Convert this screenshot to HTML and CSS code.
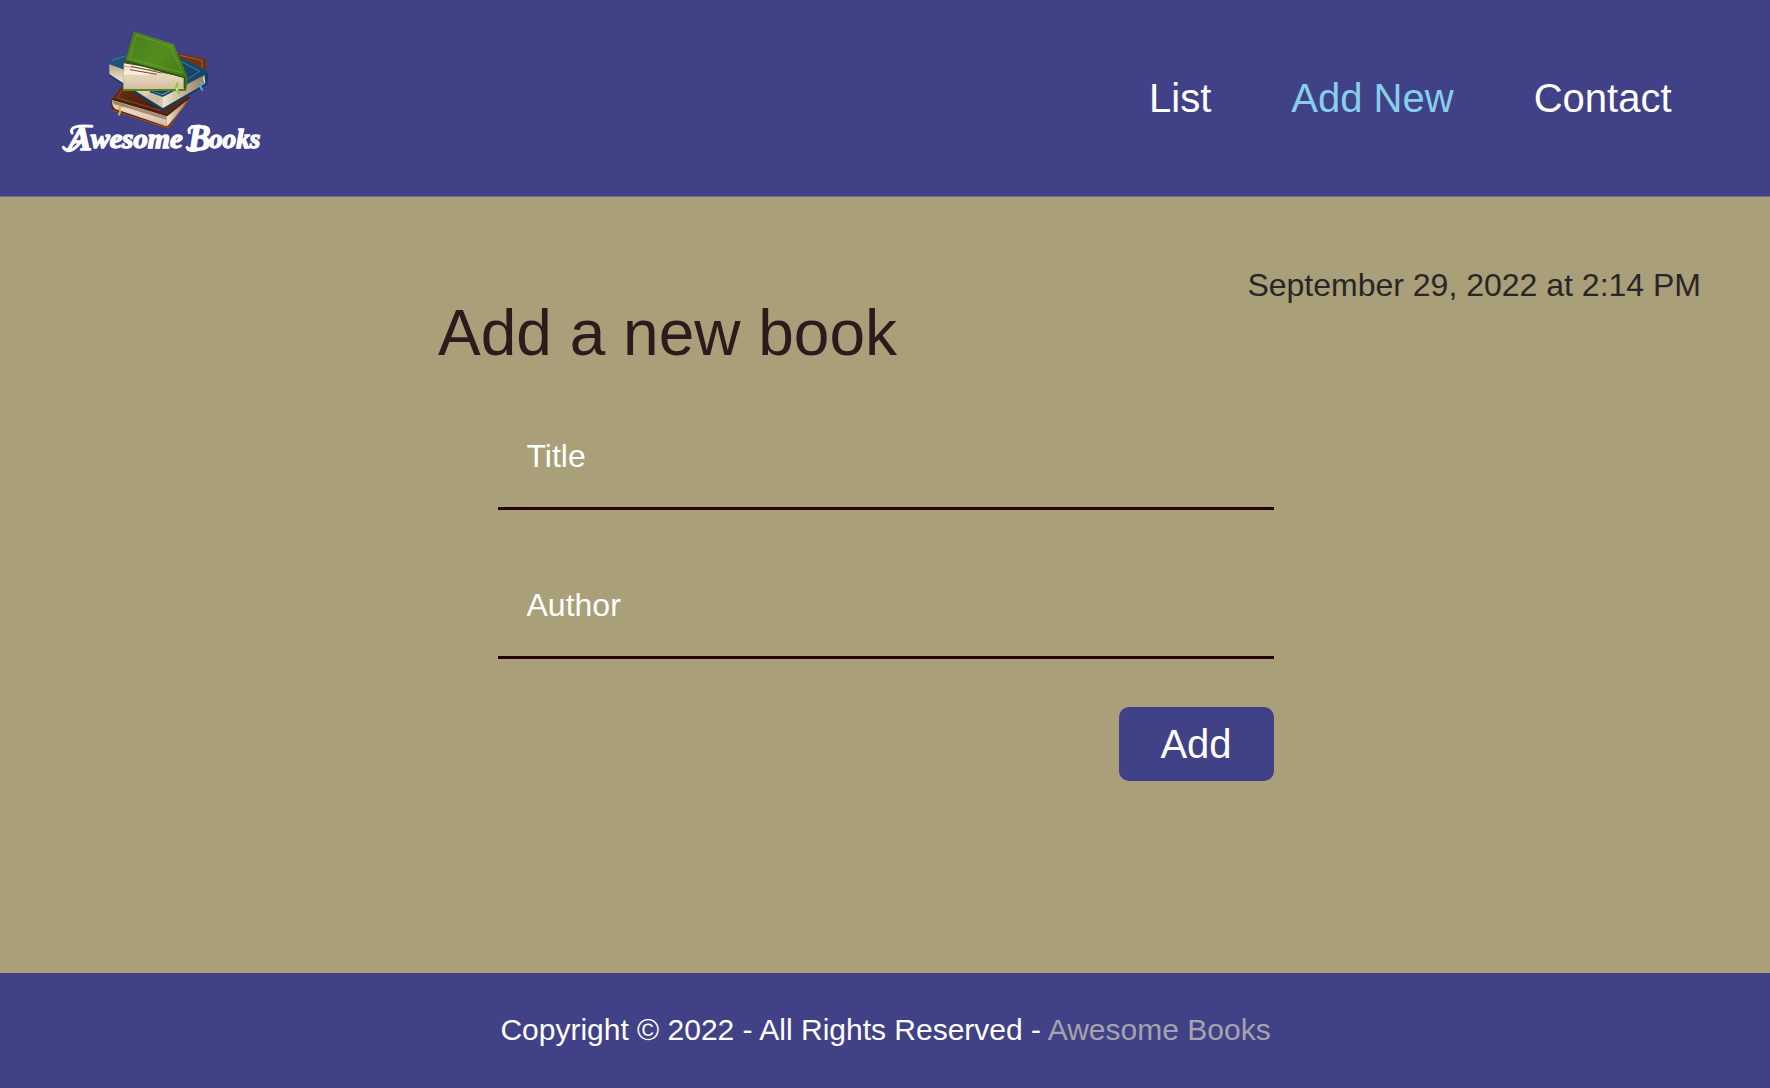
FILE: index.html
```html
<!DOCTYPE html>
<html lang="en">
<head>
<meta charset="utf-8">
<title>Awesome Books</title>
<link rel="stylesheet" href="styles.css">
</head>
<body>
<header class="header">
  <a class="logo" aria-label="Awesome Books">
    <svg class="logo-art" viewBox="0 0 690 450">
      <defs>
        <linearGradient id="green" x1="0" y1="0" x2="1" y2="1"><stop offset="0" stop-color="#437c1b"/><stop offset=".5" stop-color="#548d1e"/><stop offset="1" stop-color="#38720f"/></linearGradient>
        <linearGradient id="blue" x1="0" y1="0" x2="1" y2="1"><stop offset="0" stop-color="#20557f"/><stop offset="1" stop-color="#103a5c"/></linearGradient>
        <linearGradient id="brown" x1="0" y1="0" x2="1" y2="1"><stop offset="0" stop-color="#6b3013"/><stop offset=".5" stop-color="#48200e"/><stop offset="1" stop-color="#82401a"/></linearGradient>
        <linearGradient id="pages" x1="0" y1="0" x2="0" y2="1"><stop offset="0" stop-color="#bda58b"/><stop offset=".35" stop-color="#eadbc4"/><stop offset="1" stop-color="#d4bda1"/></linearGradient>
        <linearGradient id="side" x1="0" y1="0" x2="1" y2="0"><stop offset="0" stop-color="#f0e5d2"/><stop offset="1" stop-color="#977b60"/></linearGradient>
      </defs>
      <!-- brown book -->
      <path d="M380 98 468 118 469 153 430 175Z" fill="#70340f"/>
      <path d="M390 106 455 121 457 143" fill="none" stroke="#b57a41" stroke-width="2"/>
      <path d="M215 198 420 232 358 324Q350 327 340 323L192 272Q181 266 184 240Z" fill="url(#brown)"/>
      <path d="M187 239 350 287 349 319 196 267Q184 258 187 239Z" fill="url(#pages)"/>
      <path d="M189 242 350 289V300L193 252Z" fill="#68462c" opacity=".5"/>
      <path d="M350 287 414 234 403 258 355 315 349 319Z" fill="url(#side)"/>
      <path d="M187 237 351 286 418 232" fill="none" stroke="#4b1c0c" stroke-width="5"/>
      <path d="M190 271 342 321 357 321 416 238" fill="none" stroke="#a25427" stroke-width="3"/>
      <path d="M216 210 201 233 330 271" fill="none" stroke="#9b6335" stroke-width="2"/>
      <path d="M216 258 207 263 211 273 206 286" fill="none" stroke="#e6a646" stroke-width="6"/>
      <!-- blue book -->
      <path d="M177 122 224 101 390 112 469 151Q475 158 472 192L337 272 175 166Z" fill="url(#blue)"/>
      <path d="M178 133 225 150 300 212 338 223 463 163 466 190 338 264 178 163Z" fill="url(#pages)"/>
      <path d="M338 223 463 163Q456 174 464 192L338 264Z" fill="url(#side)"/>
      <path d="M303 212 338 226 323 252 290 230Z" fill="#cdbda4"/>
      <path d="M178 165 337 271 470 193 472 161" fill="none" stroke="#123e60" stroke-width="4"/>
      <path d="M300 214 338 228 466 161" fill="none" stroke="#164b72" stroke-width="6"/>
      <path d="M186 122 226 108M394 125 449 154 409 180" fill="none" stroke="#6590a9" stroke-width="2"/>
      <path d="M449 184 456 191 451 201 458 211" fill="none" stroke="#58a9db" stroke-width="6"/>
      <!-- green book -->
      <path d="M223 123 310 146 400 165 408 205 220 207Z" fill="#5a4936"/>
      <path d="M221 130 335 158 403 171 406 208 220 207Z" fill="url(#pages)"/>
      <path d="M223 133 330 151M223 144 335 158M224 151 304 162M222 160 300 162" stroke="#fff3dc" stroke-width="5"/>
      <path d="M243 139 335 159M240 149 320 163" stroke="#664f3c" stroke-width="3"/>
      <path d="M251 34 371 73 411 167Q413 200 407 213H219V207H402V174L226 125Z" fill="url(#green)"/>
      <path d="M259 45 363 80 396 158 239 115Z" fill="none" stroke="#8fb04c" stroke-width="2" stroke-dasharray="3 1.5"/>
      <path d="M228 123 403 172V205" fill="none" stroke="#28520c" stroke-width="4"/>
      <path d="M220 210H405" stroke="#4b8e12" stroke-width="5"/>
      <path d="M371 190 382 191 378 204 388 221" fill="none" stroke="#91c742" stroke-width="7"/>
      <path d="M371 190 378 191M379 205 383 211" fill="none" stroke="#e2f49a" stroke-width="4"/>
      <!-- wordmark -->
      <g class="wordmark">
        <text x="54" y="389" font-size="104" textLength="72" lengthAdjust="spacingAndGlyphs">A</text>
        <text x="122" y="384" font-size="80" textLength="276" lengthAdjust="spacingAndGlyphs">wesome</text>
        <text x="414" y="389" font-size="107" textLength="68" lengthAdjust="spacingAndGlyphs">B</text>
        <text x="477" y="384" font-size="84" textLength="154" lengthAdjust="spacingAndGlyphs">ooks</text>
        <path d="M40 382Q50 397 66 390 82 382 101 353M66 339Q60 325 79 320 91 316 126 319M411 382Q421 397 444 389M418 338Q411 319 449 318"/>
      </g>
    </svg>
  </a>
  <nav class="nav">
    <a>List</a>
    <a class="active">Add New</a>
    <a>Contact</a>
  </nav>
</header>
<main class="main">
  <p class="date">September 29, 2022 at 2:14 PM</p>
  <h1 class="title">Add a new book</h1>
  <form class="form">
    <input class="field" type="text" placeholder="Title" aria-label="Title">
    <input class="field" type="text" placeholder="Author" aria-label="Author">
    <button class="add" type="button">Add</button>
  </form>
</main>
<footer class="footer">
  <p>Copyright © 2022 - All Rights Reserved - <span class="brand">Awesome Books</span></p>
</footer>
</body>
</html>
```
FILE: styles.css
```css
* {
  box-sizing: border-box;
  margin: 0;
  padding: 0;
}

body {
  display: flex;
  flex-direction: column;
  height: 1088px;
  overflow: hidden;
  background: #a99f78;
  font-family: "Liberation Sans", Arial, sans-serif;
}

.header {
  display: flex;
  justify-content: space-between;
  height: 197px;
  padding: 20px 98.5px 0 50px;
  background: #414187;
  border-bottom: 1px solid #706894;
}

.logo,
.logo-art {
  display: block;
  width: 230px;
  height: 150px;
}

.wordmark {
  fill: #fff;
  stroke: #fff;
  stroke-width: 4;
  font-family: "Liberation Serif", serif;
  font-weight: bold;
  font-style: italic;
}

.wordmark path {
  fill: none;
  stroke-width: 9;
  stroke-linecap: round;
}

.nav {
  display: flex;
  gap: 80px;
  padding-top: 55px;
  font-size: 40px;
  line-height: 46px;
  color: #fff;
}

.active {
  color: #87ceeb;
}

.main {
  flex: 1;
}

.date {
  padding: 70px 69px 0 0;
  text-align: right;
  font-size: 32px;
  line-height: 36px;
  color: #2a2526;
}

.title {
  margin: -6px 0 0 438px;
  font-size: 64px;
  font-weight: 400;
  line-height: 72px;
  color: #2a1b1d;
}

.form {
  display: flex;
  flex-direction: column;
  gap: 46px;
  width: 776px;
  margin: 38px 0 0 497.5px;
}

.field {
  height: 103px;
  padding: 0 29px 1px;
  border: 0;
  border-bottom: 3px solid #260308;
  background: transparent;
  font: 32px "Liberation Sans", Arial, sans-serif;
}

.field::placeholder {
  color: #fff;
}

.add {
  align-self: flex-end;
  width: 155px;
  height: 74px;
  margin-top: 2px;
  border: 0;
  border-radius: 10px;
  background: #414187;
  color: #fff;
  font: 40px "Liberation Sans", Arial, sans-serif;
}

.footer {
  height: 115px;
  padding: 40px 0 0 1px;
  background: #414187;
  color: #fff;
  text-align: center;
  font-size: 30px;
  line-height: 34px;
}

.brand {
  color: #a5a3ad;
}
```
